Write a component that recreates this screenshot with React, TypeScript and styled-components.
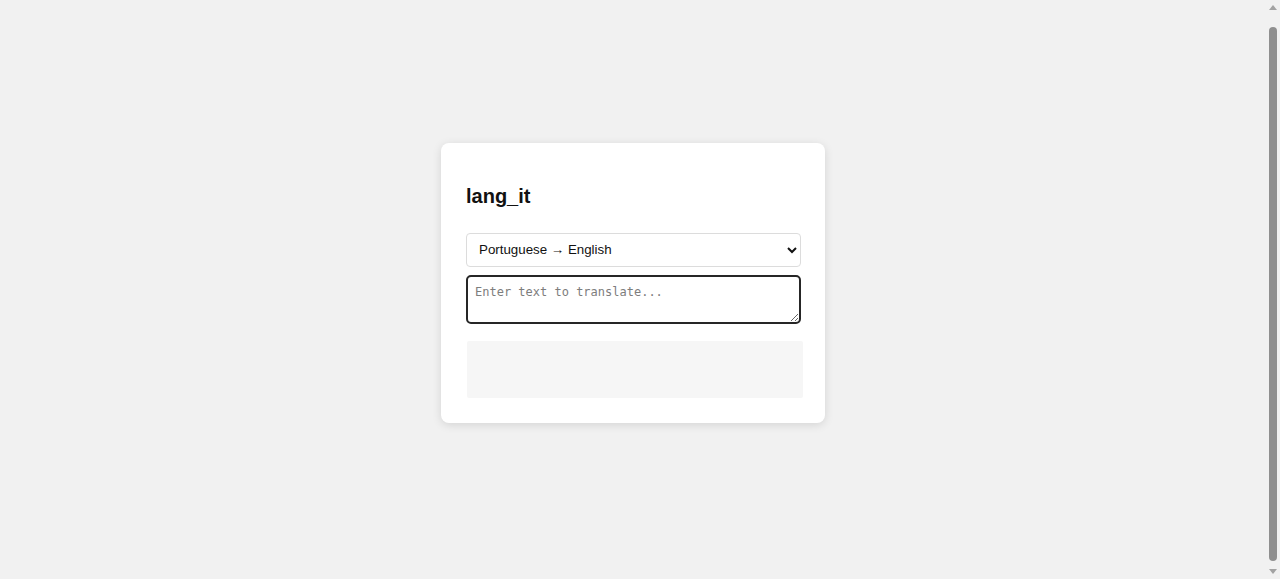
import React from "react";
import styled, { createGlobalStyle } from "styled-components";

const GlobalStyle = createGlobalStyle`
  body {
    margin: 0;
    background: #f1f1f1;
    font-family: "Liberation Sans", Arial, sans-serif;
    overflow: hidden;
  }
`;

const Page = styled.main`
  box-sizing: border-box;
  min-height: calc(100vh - 14px);
  padding: 0 14px 25px 0;
  display: flex;
  align-items: center;
  justify-content: center;
`;

const Wrap = styled.div`
  min-height: calc(100vh - 14px);
  width: 100%;
  display: flex;
  align-items: center;
  justify-content: center;
`;

const Card = styled.section`
  box-sizing: border-box;
  width: 384px;
  padding: 25px 24px 25px 25px;
  background: #ffffff;
  border-radius: 8px;
  box-shadow: 0 2px 10px rgba(0, 0, 0, 0.12);
  display: flex;
  flex-direction: column;
`;

const Title = styled.h1`
  margin: 17px 0 26px;
  font-size: 20px;
  font-weight: 700;
  line-height: 22px;
  color: #111;
`;

const Select = styled.select`
  box-sizing: border-box;
  width: 100%;
  height: 34px;
  padding: 0 8px;
  font-family: "Liberation Sans", Arial, sans-serif;
  font-size: 13.333px;
  color: #111;
  background: #fff;
  border: 1px solid #dcdcdc;
  border-radius: 4px;
  margin: 0 0 8px;
`;

const TextArea = styled.textarea`
  box-sizing: border-box;
  width: 100%;
  height: 49px;
  margin: 0 0 17px;
  padding: 8px 7px;
  font-family: "DejaVu Sans Mono", "Liberation Mono", monospace;
  font-size: 12px;
  color: #222;
  border: 2px solid #262626;
  border-radius: 5px;
  outline: none;
  resize: vertical;
  &::placeholder {
    color: #7d7d7d;
  }
`;

const Output = styled.div`
  box-sizing: border-box;
  width: calc(100% + 1px);
  margin-left: 1px;
  height: 57px;
  background: #f6f6f6;
  border-radius: 2px;
`;

const ScrollTrack = styled.div`
  position: fixed;
  top: 0;
  right: 0;
  bottom: 0;
  width: 15px;
  background: #f1f1f1;
  display: flex;
  flex-direction: column;
  align-items: center;
`;

const Arrow = styled.div<{ $down?: boolean }>`
  width: 0;
  height: 0;
  margin: ${(p) => (p.$down ? "4px 0 5px" : "5px 0 4px")};
  border-left: 4px solid transparent;
  border-right: 4px solid transparent;
  ${(p) =>
    p.$down
      ? "border-top: 5px solid #a3a3a3;"
      : "border-bottom: 5px solid #a3a3a3;"}
`;

const Thumb = styled.div`
  flex: 1;
  width: 8px;
  margin: 13px 0 4px;
  background: #8f8f8f;
  border-radius: 4px;
`;

export default function App() {
  return (
    <>
      <GlobalStyle />
      <Page>
        <Wrap>
          <Card>
            <Title>lang_it</Title>
            <Select defaultValue="pt-en">
              <option value="pt-en">Portuguese → English</option>
              <option value="en-pt">English → Portuguese</option>
            </Select>
            <TextArea placeholder="Enter text to translate..." />
            <Output />
          </Card>
        </Wrap>
      </Page>
      <ScrollTrack aria-hidden="true">
        <Arrow />
        <Thumb />
        <Arrow $down />
      </ScrollTrack>
    </>
  );
}
